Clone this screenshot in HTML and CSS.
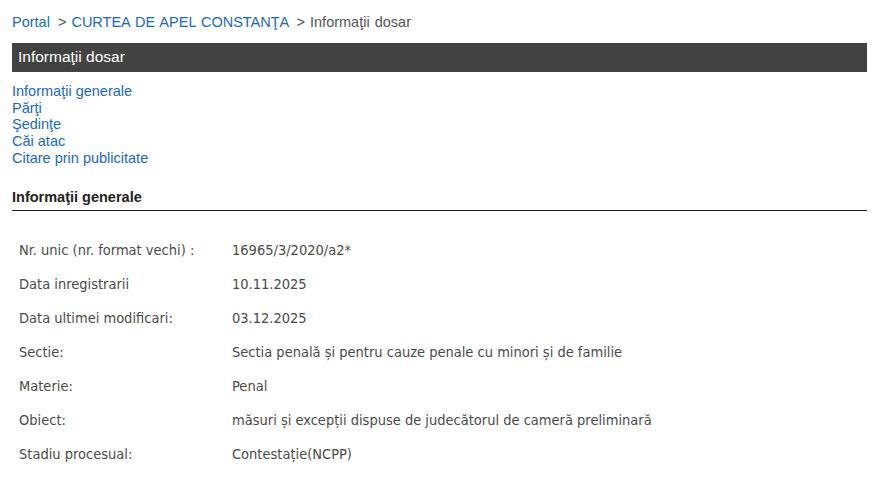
FILE: index.html
```html
<!DOCTYPE html>
<html>

	<head>
		<meta charset="UTF-8">
		<title>Informaţii dosar</title>
		<link rel="stylesheet" href="styles.css">
	</head>

	<body>
		<div class="page">
			<div class="crumbs">
				<a href="##">Portal</a>
				<span class="sep">&gt;</span>
				<a href="##">CURTEA DE APEL CONSTANŢA</a>
				<span class="sep">&gt;</span>
				<span class="here">Informaţii dosar</span>
			</div>
			<h2 class="bar">Informaţii dosar</h2>
			<ul class="menu">
				<li><a href="##">Informaţii generale</a></li>
				<li><a href="##">Părţi</a></li>
				<li><a href="##">Şedinţe</a></li>
				<li><a href="##">Căi atac</a></li>
				<li><a href="##">Citare prin publicitate</a></li>
			</ul>
			<h3 class="title">Informaţii generale</h3>
			<table class="info">
				<tr>
					<td>Nr. unic (nr. format vechi) :</td>
					<td>16965/3/2020/a2*</td>
				</tr>
				<tr>
					<td>Data inregistrarii</td>
					<td>10.11.2025</td>
				</tr>
				<tr>
					<td>Data ultimei modificari:</td>
					<td>03.12.2025</td>
				</tr>
				<tr>
					<td>Sectie:</td>
					<td>Sectia penală și pentru cauze penale cu minori și de familie</td>
				</tr>
				<tr>
					<td>Materie:</td>
					<td>Penal</td>
				</tr>
				<tr>
					<td>Obiect:</td>
					<td>măsuri și excepții dispuse de judecătorul de cameră preliminară</td>
				</tr>
				<tr>
					<td>Stadiu procesual:</td>
					<td>Contestație(NCPP)</td>
				</tr>
			</table>
		</div>
	</body>

</html>
```

FILE: styles.css
```css
* {
	margin: 0;
	padding: 0;
}

body {
	font-family: "Liberation Sans", Arial, sans-serif;
	font-size: 14.5px;
	color: #444;
	background: #fff;
}

a {
	color: #1a68c6;
	text-decoration: none;
}

.page {
	padding: 13px 10px 0 12px;
}

.crumbs {
	height: 18px;
	line-height: 18px;
	color: #555;
	word-spacing: 1px;
}

.crumbs .sep {
	margin: 0 0 0 3px;
}

.bar {
	margin-top: 12px;
	height: 29px;
	line-height: 28px;
	background: #424242;
	color: #fff;
	font-size: 15.5px;
	font-weight: normal;
	padding-left: 6px;
}

.menu {
	list-style: none;
	margin-top: 11px;
	line-height: 16.7px;
}

.title {
	margin-top: 21px;
	padding-bottom: 4px;
	border-bottom: 1px solid #222;
	font-size: 14.5px;
	color: #222;
	line-height: 18px;
}

.info {
	margin: 23px 0 0 0;
	border-spacing: 0;
	font-family: "DejaVu Sans Condensed", "DejaVu Sans", sans-serif;
	font-size: 14.5px;
	color: #4a4a4a;
}

.info td {
	height: 33.85px;
	padding: 0 7px;
	vertical-align: middle;
}

.info td:first-child {
	width: 199px;
}
```
